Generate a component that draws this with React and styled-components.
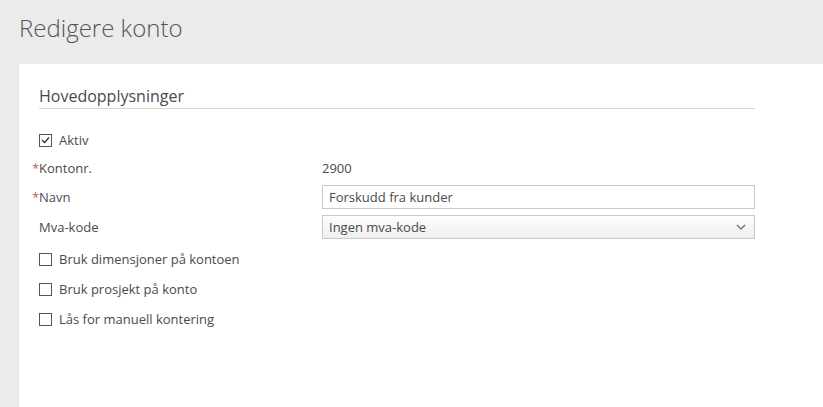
import React from "react";
import styled, { createGlobalStyle } from "styled-components";

const Global = createGlobalStyle`
  html, body {
    margin: 0;
    padding: 0;
    background: #ebebeb;
    font-family: "Open Sans", "Liberation Sans", sans-serif;
    color: #4a4a4a;
  }
`;

const Page = styled.div`
  min-height: 100vh;
  display: flex;
  flex-direction: column;
`;

const Header = styled.header`
  height: 64px;
  padding: 12px 0 0 19px;
  box-sizing: border-box;
  h1 {
    margin: 0;
    font-size: 24px;
    font-weight: 300;
    color: #555;
    line-height: 32px;
  }
`;

const Panel = styled.main`
  flex: 1;
  margin-left: 19px;
  background: #fff;
  padding: 21px 0 0 20px;
`;

const Section = styled.section`
  width: 716px;
`;

const SectionTitle = styled.h2`
  margin: 0;
  font-size: 16px;
  font-weight: 400;
  color: #4a4a4a;
  line-height: 22px;
  padding-bottom: 1px;
  border-bottom: 1px solid #d6d6d6;
`;

const Form = styled.div`
  padding-top: 17px;
  display: flex;
  flex-direction: column;
`;

const Row = styled.div`
  display: grid;
  grid-template-columns: 283px 1fr;
  align-items: center;
  height: ${(p) => p.h || 30}px;
  margin-top: ${(p) => p.mt || 0}px;
  font-size: 13px;
`;

const Label = styled.div`
  color: #4a4a4a;
`;

const Star = styled.span`
  color: #b5625f;
  margin-left: -7px;
  display: inline-block;
  width: 7px;
`;

const Value = styled.div`
  color: #4a4a4a;
`;

const Input = styled.div`
  height: 24px;
  box-sizing: border-box;
  border: 1px solid #c9c9c9;
  background: #fff;
  padding: 0 6px;
  display: flex;
  align-items: center;
  color: #4a4a4a;
`;

const Select = styled(Input)`
  justify-content: space-between;
  background: linear-gradient(#fdfdfd, #efefef);
  padding-right: 8px;
`;

const CheckRow = styled.label`
  display: flex;
  align-items: center;
  gap: 7px;
  grid-column: 1 / 3;
`;

const Box = styled.span`
  width: 13px;
  height: 13px;
  box-sizing: border-box;
  border: 1px solid #555;
  background: #fff;
  display: inline-flex;
  align-items: center;
  justify-content: center;
`;

function Check({ checked, children }) {
  return (
    <CheckRow>
      <Box>
        {checked && (
          <svg width="9" height="8" viewBox="0 0 9 8">
            <polyline points="1,4 3.5,6.5 8,1.5" fill="none" stroke="#333" strokeWidth="1.3" />
          </svg>
        )}
      </Box>
      {children}
    </CheckRow>
  );
}

export default function App() {
  return (
    <Page>
      <Global />
      <Header>
        <h1>Redigere konto</h1>
      </Header>
      <Panel>
        <Section>
          <SectionTitle>Hovedopplysninger</SectionTitle>
          <Form>
            <Row h={28}>
              <Check checked>Aktiv</Check>
            </Row>
            <Row h={28}>
              <Label>
                <Star>*</Star>Kontonr.
              </Label>
              <Value>2900</Value>
            </Row>
            <Row>
              <Label>
                <Star>*</Star>Navn
              </Label>
              <Input>Forskudd fra kunder</Input>
            </Row>
            <Row>
              <Label>Mva-kode</Label>
              <Select>
                <span>Ingen mva-kode</span>
                <svg width="10" height="6" viewBox="0 0 10 6">
                  <polyline points="1,1 5,5 9,1" fill="none" stroke="#666" strokeWidth="1.2" />
                </svg>
              </Select>
            </Row>
            <Row mt={2}>
              <Check>Bruk dimensjoner på kontoen</Check>
            </Row>
            <Row>
              <Check>Bruk prosjekt på konto</Check>
            </Row>
            <Row>
              <Check>Lås for manuell kontering</Check>
            </Row>
          </Form>
        </Section>
      </Panel>
    </Page>
  );
}
